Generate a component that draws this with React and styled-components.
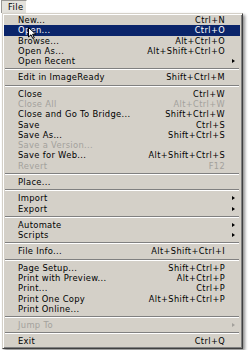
import React from "react";
import styled, { createGlobalStyle } from "styled-components";

const Global = createGlobalStyle`
  html, body { margin: 0; padding: 0; background: #ffffff; }
  body { font-family: "DejaVu Sans", Verdana, sans-serif; }
`;

const Page = styled.div`
  display: flex;
  flex-direction: column;
  align-items: flex-start;
  width: 250px;
  height: 350px;
  overflow: hidden;
`;

const Tab = styled.div`
  box-sizing: border-box;
  width: 26px;
  height: 13px;
  margin-left: 1px;
  padding-left: 6px;
  background: #e4e2dc;
  border-top: 1px solid #9a9894;
  border-left: 1px solid #9a9894;
  border-right: 1px solid #ffffff;
  font-size: 8.4px;
  line-height: 12px;
  letter-spacing: 0.4px;
  color: #000;
`;

const Menu = styled.div`
  box-sizing: border-box;
  width: 241px;
  margin-left: 2px;
  background: #d4d0c8;
  border-top: 1px solid #d4d0c8;
  border-left: 1px solid #d4d0c8;
  border-right: 1px solid #404040;
  border-bottom: 1px solid #404040;
  box-shadow: inset 1px 1px 0 #ffffff, inset -1px -1px 0 #808080,
    2px 2px 3px rgba(0, 0, 0, 0.45);
  padding: 1px 2px 1px 1px;
  display: flex;
  flex-direction: column;
`;

const Row = styled.div`
  position: relative;
  display: flex;
  align-items: center;
  height: 10.25px;
  padding-left: 14px;
  white-space: nowrap;
  background: ${(p) => (p.$active ? "#0a246a" : "transparent")};
  color: ${(p) => (p.$active ? "#ffffff" : p.$disabled ? "#a3a19c" : "#000000")};
`;

const Label = styled.span`
  flex: 1;
  font-size: 8.4px;
  letter-spacing: 0.3px;
`;

const Shortcut = styled.span`
  text-align: right;
  font-size: 8.2px;
  letter-spacing: 0.4px;
`;

const ArrowCell = styled.span`
  width: 15px;
  display: flex;
  justify-content: center;
  align-items: center;
`;

const Triangle = styled.span`
  width: 0;
  height: 0;
  margin-left: 1px;
  border-top: 2.5px solid transparent;
  border-bottom: 2.5px solid transparent;
  border-left: 3px solid ${(p) => (p.$disabled ? "#a3a19c" : "#000000")};
`;

const Separator = styled.div`
  height: 6.1px;
  display: flex;
  align-items: center;
  padding: 0 1px;
`;

const SepLine = styled.div`
  flex: 1;
  border-top: 1px solid #808080;
  border-bottom: 1px solid #ffffff;
`;

const Cursor = styled.svg`
  position: absolute;
  left: 24px;
  top: 2px;
  width: 9px;
  height: 12px;
`;

const SEP = { sep: true };

const items = [
  { label: "New...", sc: "Ctrl+N" },
  { label: "Open...", sc: "Ctrl+O", active: true },
  { label: "Browse...", sc: "Alt+Ctrl+O" },
  { label: "Open As...", sc: "Alt+Shift+Ctrl+O" },
  { label: "Open Recent", sub: true },
  SEP,
  { label: "Edit in ImageReady", sc: "Shift+Ctrl+M" },
  SEP,
  { label: "Close", sc: "Ctrl+W" },
  { label: "Close All", sc: "Alt+Ctrl+W", disabled: true },
  { label: "Close and Go To Bridge...", sc: "Shift+Ctrl+W" },
  { label: "Save", sc: "Ctrl+S" },
  { label: "Save As...", sc: "Shift+Ctrl+S" },
  { label: "Save a Version...", disabled: true },
  { label: "Save for Web...", sc: "Alt+Shift+Ctrl+S" },
  { label: "Revert", sc: "F12", disabled: true },
  SEP,
  { label: "Place..." },
  SEP,
  { label: "Import", sub: true },
  { label: "Export", sub: true },
  SEP,
  { label: "Automate", sub: true },
  { label: "Scripts", sub: true },
  SEP,
  { label: "File Info...", sc: "Alt+Shift+Ctrl+I" },
  SEP,
  { label: "Page Setup...", sc: "Shift+Ctrl+P" },
  { label: "Print with Preview...", sc: "Alt+Ctrl+P" },
  { label: "Print...", sc: "Ctrl+P" },
  { label: "Print One Copy", sc: "Alt+Shift+Ctrl+P" },
  { label: "Print Online..." },
  SEP,
  { label: "Jump To", sub: true, disabled: true },
  SEP,
  { label: "Exit", sc: "Ctrl+Q" },
];

export default function App() {
  return (
    <>
      <Global />
      <Page>
        <Tab>File</Tab>
        <Menu>
          {items.map((it, i) =>
            it.sep ? (
              <Separator key={i}>
                <SepLine />
              </Separator>
            ) : (
              <Row key={i} $active={it.active} $disabled={it.disabled}>
                <Label>{it.label}</Label>
                {it.sc && <Shortcut>{it.sc}</Shortcut>}
                <ArrowCell>
                  {it.sub && <Triangle $disabled={it.disabled} />}
                </ArrowCell>
                {it.active && (
                  <Cursor viewBox="0 0 9 12">
                    <path
                      d="M0.5 0.5 L0.5 10 L3 7.8 L4.8 11.5 L6.3 10.8 L4.6 7.2 L7.8 7.2 Z"
                      fill="#ffffff"
                      stroke="#000000"
                      strokeWidth="1"
                      strokeLinejoin="round"
                    />
                  </Cursor>
                )}
              </Row>
            )
          )}
        </Menu>
      </Page>
    </>
  );
}
